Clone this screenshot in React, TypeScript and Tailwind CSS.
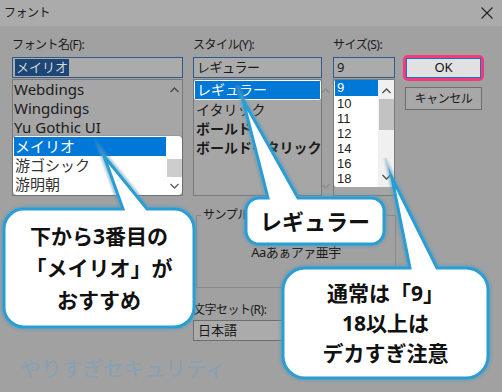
import React from 'react'

const jp = { fontFamily: '"Noto Sans", "Noto Sans CJK JP", sans-serif' }

function ChevronUp({ color = '#505050' }: { color?: string }) {
  return (
    <svg width="9" height="6" viewBox="0 0 9 6">
      <polyline points="0.5,5 4.5,1 8.5,5" fill="none" stroke={color} strokeWidth="1.4" />
    </svg>
  )
}

function ChevronDown({ color = '#505050' }: { color?: string }) {
  return (
    <svg width="9" height="6" viewBox="0 0 9 6">
      <polyline points="0.5,1 4.5,5 8.5,1" fill="none" stroke={color} strokeWidth="1.4" />
    </svg>
  )
}

// 吹き出しの形（上辺にしっぽ）
function bubble(x1: number, y1: number, x2: number, y2: number, r: number, b1: number, b2: number, tx: number, ty: number) {
  return `M${x1 + r},${y1} L${b1},${y1} L${tx},${ty} L${b2},${y1} L${x2 - r},${y1} A${r},${r} 0 0 1 ${x2},${y1 + r} L${x2},${y2 - r} A${r},${r} 0 0 1 ${x2 - r},${y2} L${x1 + r},${y2} A${r},${r} 0 0 1 ${x1},${y2 - r} L${x1},${y1 + r} A${r},${r} 0 0 1 ${x1 + r},${y1} Z`
}

const bubbles = [
  bubble(4, 209, 194, 327, 20, 123, 147, 104, 156),
  bubble(246, 198, 384, 244, 13, 268, 298, 243, 100),
  bubble(283, 268, 488, 378, 22, 410, 437, 392, 178),
]

const sizes = ['10', '11', '12', '14', '16', '18']

export default function App() {
  return (
    <div className="relative w-[502px] h-[392px] overflow-hidden bg-[#a1a1a1] text-[#1b1b1b] flex flex-col" style={jp}>
      {/* タイトルバー */}
      <div className="h-[26px] shrink-0 bg-[#ababab] flex items-center justify-between pl-[4px] pr-[9px]">
        <span className="text-[12px] leading-[14px] tracking-[-0.5px]">フォント</span>
        <svg width="12" height="12" viewBox="0 0 12 12">
          <path d="M0.5 0.5 L11.5 11.5 M11.5 0.5 L0.5 11.5" stroke="#222" strokeWidth="1.1" />
        </svg>
      </div>

      {/* 上段 */}
      <div className="flex pl-[12px] shrink-0">
        {/* フォント名 */}
        <div className="w-[171px] flex flex-col">
          <div className="h-[31px] pt-[12px] text-[12px] leading-[14px] tracking-[-0.5px]">フォント名(F):</div>
          <div className="h-[21px] border border-[#2c5c8f] bg-[#ababab] flex items-center px-[2px]">
            <span className="bg-[#1c4674] text-[#d8d8d8] text-[13px] leading-[17px] px-[1px]">メイリオ</span>
          </div>
          <div className="mt-[1px] h-[117px] border border-[#7a7a7a] bg-[#a6a6a6] flex flex-col">
            <div className="flex">
              <div className="flex-1 text-[15px] pl-[1px]">
                <div className="h-[19px] leading-[19px]">Webdings</div>
                <div className="h-[19px] leading-[19px]">Wingdings</div>
                <div className="h-[18px] leading-[18px]">Yu Gothic UI</div>
              </div>
              <div className="w-[16px] flex justify-center pt-[7px]">
                <ChevronUp color="#4a4a4a" />
              </div>
            </div>
            <div className="bg-white rounded-[4px] flex h-[59px] shadow-[0_0_2px_rgba(0,0,0,0.3)]">
              <div className="flex-1 pl-[1px] pt-[1px] text-[15px]">
                <div className="h-[19px] leading-[19px] bg-[#0078d7] text-white pl-[1px]">メイリオ</div>
                <div className="h-[19px] leading-[19px] pl-[1px] text-[#333]">游ゴシック</div>
                <div className="h-[19px] leading-[19px] pl-[1px] text-[#333]">游明朝</div>
              </div>
              <div className="w-[16px] flex flex-col items-center">
                <div className="h-[23px]" />
                <div className="w-[15px] h-[18px] bg-[#cdcdcd]" />
                <div className="flex-1 flex items-center">
                  <ChevronDown color="#606060" />
                </div>
              </div>
            </div>
          </div>
        </div>

        {/* スタイル */}
        <div className="w-[129px] ml-[10px] flex flex-col">
          <div className="h-[31px] pt-[12px] text-[12px] leading-[14px] tracking-[-0.5px]">スタイル(Y):</div>
          <div className="h-[21px] border border-[#2c5c8f] bg-[#ababab] flex items-center px-[3px]">
            <span className="text-[13px] leading-[17px] tracking-[-0.5px]">レギュラー</span>
          </div>
          <div className="mt-[1px] h-[117px] border border-[#7a7a7a] bg-[#a6a6a6] flex">
            <div className="flex-1 text-[14px]">
              <div className="h-[20px] p-[1px] bg-white rounded-[3px]">
                <div className="h-full bg-[#0078d7] text-white leading-[18px] pl-[2px]">レギュラー</div>
              </div>
              <div className="h-[19px] leading-[19px] pl-[2px]">イタリック</div>
              <div className="h-[19px] leading-[19px] pl-[2px] font-bold">ボールド</div>
              <div className="h-[19px] leading-[19px] pl-[2px] font-bold whitespace-nowrap overflow-hidden">ボールドイタリック</div>
            </div>
            <div className="w-[16px] flex flex-col items-center justify-between pt-[8px] pb-[6px]">
              <ChevronUp color="#8c8c8c" />
              <ChevronDown color="#8c8c8c" />
            </div>
          </div>
        </div>

        {/* サイズ */}
        <div className="w-[62px] ml-[11px] flex flex-col">
          <div className="h-[31px] pt-[12px] text-[12px] leading-[14px] tracking-[-0.5px]">サイズ(S):</div>
          <div className="h-[21px] border border-[#2c5c8f] bg-[#ababab] flex items-center px-[3px]">
            <span className="text-[13px] leading-[17px]">9</span>
          </div>
          <div className="mt-[1px] h-[117px] border border-[#7a7a7a] bg-[#a6a6a6]">
            <div className="h-[107px] bg-white rounded-[3px] flex text-[13px] text-[#222] font-['Liberation_Sans',sans-serif]">
              <div className="flex-1 pl-[1px]">
                <div className="h-[16px] leading-[16px] bg-[#0078d7] text-white pl-[2px]">9</div>
                {sizes.map((s) => (
                  <div key={s} className="h-[15px] leading-[15px] pl-[2px]">{s}</div>
                ))}
              </div>
              <div className="w-[16px] bg-[#f0f0f0] flex flex-col items-center pt-[8px]">
                <ChevronUp color="#505050" />
                <div className="mt-[5px] w-[15px] h-[31px] bg-[#c2c2c2]" />
                <div className="flex-1" />
                <div className="pb-[7px]">
                  <ChevronDown color="#505050" />
                </div>
              </div>
            </div>
          </div>
        </div>

        {/* ボタン */}
        <div className="w-[81px] ml-[8px] pt-[29px] flex flex-col">
          <div className="h-[26px] border-[3px] border-[#f03a7c] rounded-[5px]">
            <div className="h-full bg-[#e1e1e1] border border-[#1f6fc4] flex items-center justify-center text-[13px] text-[#111]">OK</div>
          </div>
          <div className="mt-[6px] mx-[2px] h-[23px] border border-[#6e6e6e] bg-[#a8a8a8] flex items-center justify-center text-[12px] tracking-[-0.5px]">キャンセル</div>
        </div>
      </div>

      {/* 下段 */}
      <div className="ml-[193px] flex flex-col shrink-0">
        <fieldset className="ml-[3px] mt-[12px] w-[200px] h-[80px] border border-[#8a8a8a]">
          <legend className="ml-[4px] px-[2px] text-[12px] leading-[14px] tracking-[-0.5px]">サンプル</legend>
          <div className="h-[62px] flex items-center justify-center text-[13px] tracking-[-0.5px]">Aaあぁアァ亜宇</div>
        </fieldset>
        <div className="mt-[15px] text-[12px] leading-[14px] tracking-[-0.5px]">文字セット(R):</div>
        <div className="mt-[3px] w-[130px] h-[21px] border border-[#6e6e6e] bg-[#ababab] flex items-center px-[4px] text-[13px]">日本語</div>
      </div>

      <div className="pl-[20px] mt-[16px] text-[21px] leading-[22px] text-[#87a0b4] tracking-[-0.3px]">やりすぎセキュリティ</div>

      {/* 吹き出し */}
      <svg className="absolute inset-0 pointer-events-none" width="502" height="392" viewBox="0 0 502 392">
        <defs>
          <filter id="halo" x="-10%" y="-10%" width="120%" height="120%">
            <feGaussianBlur stdDeviation="1.3" />
          </filter>
        </defs>
        {bubbles.map((d, i) => (
          <path key={'h' + i} d={d} fill="none" stroke="#5e9ab8" strokeOpacity="0.55" strokeWidth="7" strokeLinejoin="miter" strokeMiterlimit={30} filter="url(#halo)" />
        ))}
        {bubbles.map((d, i) => (
          <path key={'b' + i} d={d} fill="#fff" stroke="#2a9dd4" strokeWidth="3" strokeLinejoin="miter" strokeMiterlimit={30} />
        ))}
      </svg>

      <div className="absolute left-[4px] top-[209px] w-[190px] h-[118px] flex flex-col items-center justify-center text-[21px] leading-[32px] font-bold text-[#111]">
        <div>下から3番目の</div>
        <div>「メイリオ」が</div>
        <div>おすすめ</div>
      </div>
      <div className="absolute left-[246px] top-[198px] w-[138px] h-[46px] flex items-center justify-center text-[22px] font-bold text-[#111]">
        レギュラー
      </div>
      <div className="absolute left-[283px] top-[268px] w-[205px] h-[110px] flex flex-col items-center justify-center text-[21px] leading-[30px] font-bold text-[#111]">
        <div>通常は「9」</div>
        <div>18以上は</div>
        <div>デカすぎ注意</div>
      </div>
    </div>
  )
}
